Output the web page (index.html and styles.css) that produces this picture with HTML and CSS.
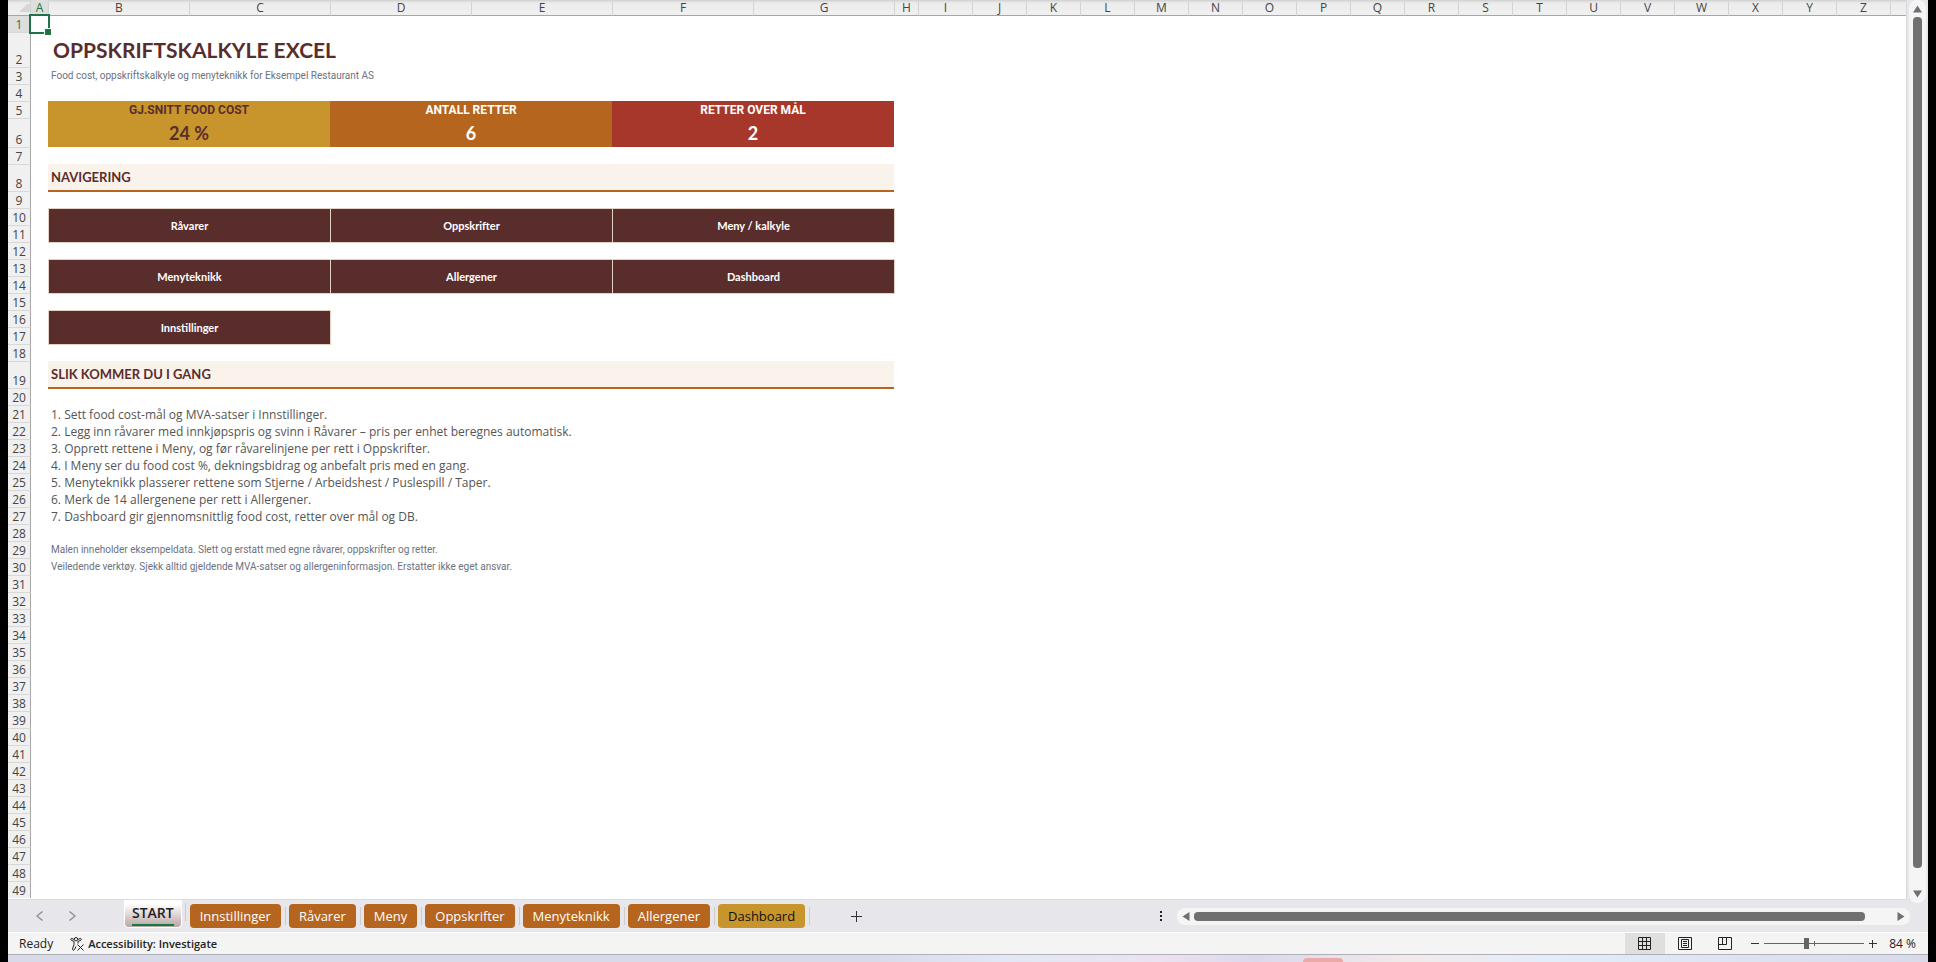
FILE: index.html
```
<!DOCTYPE html>
<html lang="no">
<head>
    <meta charset="UTF-8">
    <meta name="viewport" content="width=device-width, initial-scale=1.0">
    <title>Oppskriftskalkyle Excel</title>
    <link rel="stylesheet" href="styles.css">
</head>
<body>
    <div class="workbook">
        <div class="sheet-area">
            <div class="sheet">
                <table class="grid">
                    <colgroup>
                        <col class="col-head"><col class="col-a">
                        <col class="col-wide" span="6">
                        <col class="col-h">
                        <col class="col-std" span="18">
                        <col>
                    </colgroup>
                    <thead>
                        <tr>
                            <th class="corner"><span class="corner-mark"></span></th>
                            <th class="active">A</th><th>B</th><th>C</th><th>D</th><th>E</th><th>F</th><th>G</th><th>H</th>
                            <th>I</th><th>J</th><th>K</th><th>L</th><th>M</th><th>N</th><th>O</th><th>P</th><th>Q</th>
                            <th>R</th><th>S</th><th>T</th><th>U</th><th>V</th><th>W</th><th>X</th><th>Y</th><th>Z</th><th></th>
                        </tr>
                    </thead>
                    <tbody>
                        <tr><th class="active">1</th><td class="selected"><span class="cursor"></span></td></tr>
                        <tr class="row-title"><th>2</th><td></td><td colspan="6"><h1>OPPSKRIFTSKALKYLE EXCEL</h1></td></tr>
                        <tr><th>3</th><td></td><td class="note" colspan="6">Food cost, oppskriftskalkyle og menyteknikk for Eksempel Restaurant AS</td></tr>
                        <tr><th>4</th></tr>
                        <tr class="kpi-label"><th>5</th><td></td><td class="gold" colspan="2">GJ.SNITT FOOD COST</td><td class="orange" colspan="2">ANTALL RETTER</td><td class="red" colspan="2">RETTER OVER MÅL</td></tr>
                        <tr class="kpi-value"><th>6</th><td></td><td class="gold" colspan="2">24 %</td><td class="orange" colspan="2">6</td><td class="red" colspan="2">2</td></tr>
                        <tr><th>7</th></tr>
                        <tr class="row-section"><th>8</th><td></td><td colspan="6"><h2>NAVIGERING</h2></td></tr>
                        <tr><th>9</th></tr>
                        <tr><th>10</th><td></td><td class="nav" colspan="2" rowspan="2"><a href="#">Råvarer</a></td><td class="nav" colspan="2" rowspan="2"><a href="#">Oppskrifter</a></td><td class="nav" colspan="2" rowspan="2"><a href="#">Meny / kalkyle</a></td></tr>
                        <tr><th>11</th></tr>
                        <tr><th>12</th></tr>
                        <tr><th>13</th><td></td><td class="nav" colspan="2" rowspan="2"><a href="#">Menyteknikk</a></td><td class="nav" colspan="2" rowspan="2"><a href="#">Allergener</a></td><td class="nav" colspan="2" rowspan="2"><a href="#">Dashboard</a></td></tr>
                        <tr><th>14</th></tr>
                        <tr><th>15</th></tr>
                        <tr><th>16</th><td></td><td class="nav" colspan="2" rowspan="2"><a href="#">Innstillinger</a></td></tr>
                        <tr><th>17</th></tr>
                        <tr><th>18</th></tr>
                        <tr class="row-section"><th>19</th><td></td><td colspan="6"><h2>SLIK KOMMER DU I GANG</h2></td></tr>
                        <tr><th>20</th></tr>
                        <tr><th>21</th><td></td><td class="step" colspan="6">1. Sett food cost-mål og MVA-satser i Innstillinger.</td></tr>
                        <tr><th>22</th><td></td><td class="step" colspan="6">2. Legg inn råvarer med innkjøpspris og svinn i Råvarer – pris per enhet beregnes automatisk.</td></tr>
                        <tr><th>23</th><td></td><td class="step" colspan="6">3. Opprett rettene i Meny, og før råvarelinjene per rett i Oppskrifter.</td></tr>
                        <tr><th>24</th><td></td><td class="step" colspan="6">4. I Meny ser du food cost %, dekningsbidrag og anbefalt pris med en gang.</td></tr>
                        <tr><th>25</th><td></td><td class="step" colspan="6">5. Menyteknikk plasserer rettene som Stjerne / Arbeidshest / Puslespill / Taper.</td></tr>
                        <tr><th>26</th><td></td><td class="step" colspan="6">6. Merk de 14 allergenene per rett i Allergener.</td></tr>
                        <tr><th>27</th><td></td><td class="step" colspan="6">7. Dashboard gir gjennomsnittlig food cost, retter over mål og DB.</td></tr>
                        <tr><th>28</th></tr>
                        <tr><th>29</th><td></td><td class="note" colspan="6">Malen inneholder eksempeldata. Slett og erstatt med egne råvarer, oppskrifter og retter.</td></tr>
                        <tr><th>30</th><td></td><td class="note" colspan="6">Veiledende verktøy. Sjekk alltid gjeldende MVA-satser og allergeninformasjon. Erstatter ikke eget ansvar.</td></tr>
                        <tr><th>31</th></tr>
                        <tr><th>32</th></tr>
                        <tr><th>33</th></tr>
                        <tr><th>34</th></tr>
                        <tr><th>35</th></tr>
                        <tr><th>36</th></tr>
                        <tr><th>37</th></tr>
                        <tr><th>38</th></tr>
                        <tr><th>39</th></tr>
                        <tr><th>40</th></tr>
                        <tr><th>41</th></tr>
                        <tr><th>42</th></tr>
                        <tr><th>43</th></tr>
                        <tr><th>44</th></tr>
                        <tr><th>45</th></tr>
                        <tr><th>46</th></tr>
                        <tr><th>47</th></tr>
                        <tr><th>48</th></tr>
                        <tr><th>49</th></tr>
                    </tbody>
                </table>
            </div>
            <div class="scroll-y">
                <svg width="9" height="8" viewBox="0 0 9 8"><path d="M4.500 0.500L9 7.500H0z" fill="#707070"/></svg>
                <div class="thumb-y"></div>
                <svg width="9" height="8" viewBox="0 0 9 8"><path d="M0 0.500H9L4.500 7.500z" fill="#707070"/></svg>
            </div>
        </div>

        <div class="tab-bar">
            <div class="tab-arrows">
                <button class="icon-btn" aria-label="Previous sheet"><svg width="8" height="10" viewBox="0 0 8 10"><path d="M6.500 .5L1 5l5.500 4.500" fill="none" stroke="#8c8c8c" stroke-width="1.300"/></svg></button>
                <button class="icon-btn" aria-label="Next sheet"><svg width="8" height="10" viewBox="0 0 8 10"><path d="M1.500 .5L7 5l-5.500 4.500" fill="none" stroke="#8c8c8c" stroke-width="1.300"/></svg></button>
            </div>
            <div class="tabs">
                <button class="tab current"><span>START</span></button>
                <button class="tab">Innstillinger</button>
                <button class="tab">Råvarer</button>
                <button class="tab">Meny</button>
                <button class="tab">Oppskrifter</button>
                <button class="tab">Menyteknikk</button>
                <button class="tab">Allergener</button>
                <button class="tab yellow">Dashboard</button>
            </div>
            <button class="icon-btn add" aria-label="New sheet"><svg width="11" height="11" viewBox="0 0 11 11"><path d="M5.500 0v11M0 5.500h11" stroke="#333" fill="none"/></svg></button>
            <div class="scroll-x-wrap">
                <svg width="2" height="10" viewBox="0 0 2 10"><path d="M0 0h2v2H0zM0 4h2v2H0zM0 8h2v2H0z" fill="#222"/></svg>
                <div class="scroll-x">
                    <svg width="8" height="9" viewBox="0 0 8 9"><path d="M7.500 0V9L0.500 4.500z" fill="#707070"/></svg>
                    <div class="thumb-x"></div>
                    <svg width="8" height="9" viewBox="0 0 8 9"><path d="M0.500 0V9L7.500 4.500z" fill="#707070"/></svg>
                </div>
            </div>
        </div>

        <div class="status-bar">
            <span class="ready">Ready</span>
            <button class="access">
                <svg width="15" height="14" viewBox="0 0 15 14" fill="none" stroke="#222"><circle cx="6" cy="2.200" r="1.700"/><path d="M4.300 2.600L2 1.500C.8 1.200.2 2.600 1.300 3.200L4 4.500v3L2.500 12c-.2 1.300 1.400 1.800 1.900.7L6 9.500M7.700 2.600L10 1.500c1.300-.3 1.900 1.100.8 1.700L8 4.500v2M7.500 7.500l6 6M13.500 7.500l-6 6"/></svg>
                Accessibility: Investigate
            </button>
            <div class="views">
                <button class="view on" aria-label="Normal"><svg width="14" height="14" viewBox="0 0 14 14" fill="none" stroke="#222"><path d="M.5.5h12v12H.5zM4.500.5v12M8.500.5v12M.5 4.500h12M.5 8.500h12"/></svg></button>
                <button class="view" aria-label="Page layout"><svg width="14" height="14" viewBox="0 0 14 14" fill="none" stroke="#222"><path d="M.5.5h13v12H.5zM3.500 2.500h7v8h-7zM5 4.500h4M5 6.500h4M5 8.500h4"/></svg></button>
                <button class="view" aria-label="Page break preview"><svg width="14" height="14" viewBox="0 0 14 14" fill="none" stroke="#222"><path d="M.5.5h13v12H.5zM.5 7.500h8v-7M4.500.5v7"/></svg></button>
            </div>
            <div class="zoom">
                <button class="icon-btn" aria-label="Zoom out"><svg width="8" height="8" viewBox="0 0 8 8"><path d="M0 3.500h8" stroke="#333"/></svg></button>
                <input class="slider" type="range" min="10" max="158" value="72" aria-label="Zoom">
                <button class="icon-btn" aria-label="Zoom in"><svg width="8" height="8" viewBox="0 0 8 8"><path d="M0 3.500h8M3.500 0v8" stroke="#333"/></svg></button>
                <span class="percent">84 %</span>
            </div>
        </div>
        <div class="desktop"><span class="app-hint"></span></div>
    </div>
</body>
</html>
```
FILE: styles.css
```
* {
    box-sizing: border-box;
}

body {
    margin: 0;
    padding: 0 8px;
    height: 100vh;
    background: #000;
    overflow: hidden;
    font-family: "Open Sans", "Noto Sans", sans-serif;
    font-size: 12px;
    color: #222;
}

button {
    font-family: inherit;
    font-size: inherit;
    color: inherit;
    background: none;
    border: none;
    padding: 0;
    cursor: pointer;
}

svg {
    display: block;
    flex: none;
}

.workbook {
    display: flex;
    flex-direction: column;
    height: 100%;
    background: #e6e6eb;
}

/* Sheet */
.sheet-area {
    display: flex;
    flex: 1;
    min-height: 0;
}

.sheet {
    flex: 1;
    min-width: 0;
    overflow: hidden;
    background: #fff;
    border-right: 1px solid #d9d9dd;
    border-bottom: 1px solid #dcdcdc;
}

.grid {
    width: 100%;
    table-layout: fixed;
    border-collapse: separate;
    border-spacing: 0;
}

.col-head { width: 23px; }
.col-a { width: 17px; }
.col-wide { width: 141px; }
.col-h { width: 24px; }
.col-std { width: 54px; }

.grid th,
.grid td {
    padding: 0;
    height: 17px;
    line-height: 16px;
    white-space: nowrap;
}

.grid th {
    font-weight: normal;
    font-size: 12px;
    color: #444;
    background: #f0f0f0;
}

.grid thead th {
    height: 16px;
    line-height: 15px;
    border-left: 1px solid #d4d4d4;
    border-bottom: 1px solid #a6a6a6;
    background: linear-gradient(#d0d0d0, #ececec 3px, #f0f0f0);
}

.grid tbody th {
    padding-top: 2px;
    line-height: 14px;
    border-right: 1px solid #a6a6a6;
    border-top: 1px solid #d8d8d8;
    vertical-align: bottom;
}

.grid tbody tr:first-child th,
.grid tbody tr:first-child td {
    height: 16px;
    border-top: none;
}

.grid thead .corner {
    border-left: none;
    border-right: 1px solid #d4d4d4;
}

.corner-mark {
    display: block;
    margin-left: 11px;
    border-left: 8px solid transparent;
    border-bottom: 8px solid #d6d6d6;
}

.grid .active {
    color: #217346;
    background: #dedede;
}

.grid thead .active {
    border-left: none;
    background: #dedede;
}

.selected {
    position: relative;
}

.cursor {
    position: absolute;
    top: -2px;
    left: -2px;
    width: 21px;
    height: 20px;
    border: 2px solid #217346;
}

.cursor::after {
    content: "";
    position: absolute;
    right: -3px;
    bottom: -3px;
    width: 6px;
    height: 6px;
    background: #217346;
    border: solid #fff;
    border-width: 1px 0 0 1px;
}

.grid .row-title th,
.grid .row-title td {
    height: 35px;
}

h1,
h2 {
    margin: 0;
    font-family: Lato, sans-serif;
    color: #5a2d2d;
}

h1 {
    padding-left: 5px;
    font-size: 21px;
    line-height: 34px;
}

.grid .note {
    padding-left: 3px;
    font-family: Roboto, sans-serif;
    font-size: 10px;
    color: #6b7280;
}

.gold { background: #c8952c; color: #5a2d2d; }
.orange { background: #b5651d; color: #fff; }
.red { background: #a8372b; color: #fff; }

.kpi-label td {
    font-family: Roboto, sans-serif;
    font-size: 12px;
    font-weight: bold;
    text-align: center;
}

.grid .kpi-value th,
.grid .kpi-value td {
    height: 29px;
}

.kpi-value td {
    font-family: Lato, sans-serif;
    font-size: 18px;
    font-weight: bold;
    text-align: center;
}

.grid .row-section th,
.grid .row-section td {
    height: 27px;
}

h2 {
    height: 28px;
    margin-bottom: -1px;
    padding-left: 3px;
    background: #f9f3ec;
    border-bottom: 2px solid #b5651d;
    font-size: 13px;
    line-height: 27px;
}

.nav a {
    display: block;
    height: 35px;
    margin: 0 -1px -1px 0;
    border: 1px solid #e3d3c3;
    background: #5a2d2d;
    color: #fff;
    font-family: Lato, sans-serif;
    font-size: 11px;
    font-weight: bold;
    line-height: 33px;
    text-align: center;
    text-decoration: none;
}

.grid .step {
    padding: 2px 0 0 3px;
    line-height: 15px;
    color: #555;
}

/* Scroll bars */
.scroll-y {
    display: flex;
    flex-direction: column;
    align-items: center;
    gap: 4px;
    width: 17px;
    margin: 0 2px -3px 2px;
    padding: 5px 0;
    border-radius: 8px;
    background: #f5f5f5;
    z-index: 1;
}

.thumb-y {
    flex: 1;
    width: 9px;
    margin-bottom: 18px;
    border-radius: 4px;
    background: #707070;
}

.scroll-x {
    display: flex;
    flex: 1;
    align-items: center;
    gap: 4px;
    height: 17px;
    padding: 0 5px;
    border-radius: 8px;
    background: #f5f5f5;
}

.thumb-x {
    flex: 1;
    height: 9px;
    margin-right: 28px;
    border-radius: 4px;
    background: #707070;
}

.scroll-x-wrap {
    display: flex;
    align-items: center;
    gap: 15px;
    width: 40%;
    margin-left: auto;
    padding-right: 18px;
}

/* Sheet tabs */
.tab-bar {
    display: flex;
    align-items: center;
    height: 32px;
}

.tab-arrows {
    display: flex;
    gap: 24px;
    width: 116px;
    padding-left: 28px;
}

.tabs {
    display: flex;
    align-items: center;
}

.tab {
    position: relative;
    height: 24px;
    margin-right: 8px;
    padding: 0 10px;
    border-radius: 4px;
    background: #b5651d;
    color: #fff;
    font-size: 13px;
    line-height: 24px;
}

.tab::after {
    content: "";
    position: absolute;
    top: 3px;
    right: -5px;
    width: 1px;
    height: 18px;
    background: #cccccf;
}

.tab.yellow {
    background: #c8952c;
    color: #111;
}

.tab.current {
    height: 28px;
    margin-bottom: 4px;
    padding: 0 7px;
    border: 1px solid #fff;
    border-top: none;
    border-radius: 0 0 5px 5px;
    background: linear-gradient(#fff 15%, #b9a5a5);
    color: #222;
    font-size: 14px;
    font-weight: 600;
}

.tab.current span {
    display: block;
    border-bottom: 2px solid #107c41;
    line-height: 22px;
}

.icon-btn {
    display: flex;
    align-items: center;
    justify-content: center;
}

.add {
    margin-left: 38px;
}

/* Status bar */
.status-bar {
    display: flex;
    align-items: center;
    height: 23px;
    border-top: 1px solid #fff;
    border-bottom: 1px solid #b0b0b8;
    background: #f4f4f4;
}

.ready {
    padding-left: 11px;
}

.access {
    display: flex;
    align-items: center;
    gap: 3px;
    margin-left: 17px;
    font-size: 11px;
    font-weight: 600;
}

.views {
    display: flex;
    margin-left: auto;
}

.view {
    display: flex;
    align-items: center;
    justify-content: center;
    width: 40px;
    height: 21px;
}

.view.on {
    background: #dfdfdf;
}

.zoom {
    display: flex;
    align-items: center;
    gap: 5px;
    margin-left: 6px;
    padding-right: 12px;
}

.slider {
    appearance: none;
    width: 100px;
    height: 12px;
    margin: 0;
    background: linear-gradient(#666, #666) 50px 50% / 1px 5px no-repeat,
                linear-gradient(#666, #666) 0 50% / 100% 1px no-repeat;
}

.slider::-webkit-slider-thumb {
    appearance: none;
    width: 5px;
    height: 11px;
    background: #666;
}

.percent {
    margin-left: 7px;
}

/* Strip of the desktop under the window */
.desktop {
    height: 7px;
    background: linear-gradient(90deg, #d8daea 0, #d8daea 45%, #e2e8f5 52%, #ece2f0 60%, #dcd8ec 65%, #f2eaea 73%, #e3edfa 80%, #d8daea 100%);
}

.app-hint {
    display: block;
    width: 40px;
    height: 4px;
    margin-left: 1295px;
    border-radius: 4px 4px 0 0;
    background: #ecaaa7;
    position: relative;
    top: 3px;
}
```
